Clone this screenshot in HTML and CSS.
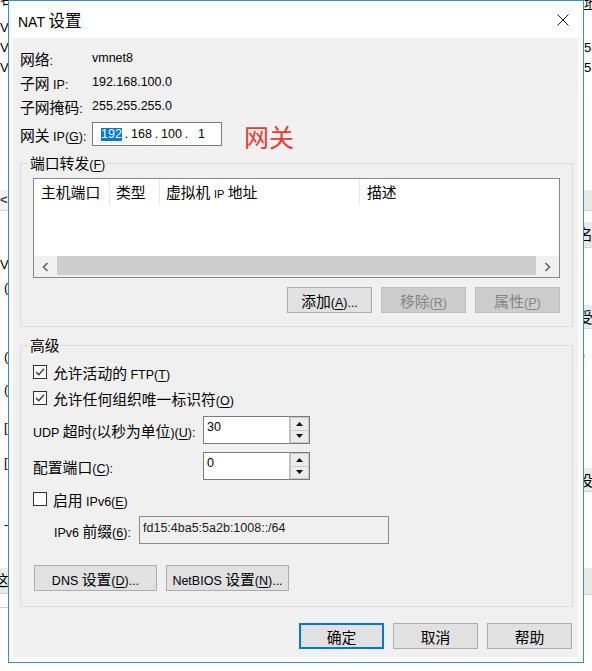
FILE: index.html
```html
<!DOCTYPE html>
<html lang="zh-CN">
<head>
<meta charset="utf-8">
<title>NAT 设置</title>
<link rel="stylesheet" href="styles.css">
</head>
<body>
<div class="desk">
  <div class="strip lstrip">
    <span class="frag c fy0">名</span>
    <span class="frag fy1">V</span>
    <span class="frag fy2">V</span>
    <span class="frag fy3">V</span>
    <div class="gbar gb1"><span class="chev">&lt;</span></div>
    <span class="frag fy4">V</span>
    <span class="frag fx fy5">(</span>
    <span class="frag fx fy6">(</span>
    <span class="frag fx fy7">(</span>
    <span class="frag fx fy8">[</span>
    <span class="frag fx fy9">[</span>
    <span class="frag fx fy10">-</span>
    <div class="gbar gb2"><span class="c cut">这</span></div>
    <div class="hline hl1"></div>
  </div>
  <div class="strip rstrip">
    <span class="frag c fy0r">地</span>
    <span class="frag fr1">58</span>
    <span class="frag fr2">58</span>
    <div class="gbar gr1"></div>
    <div class="gbar gr2"><span class="c cut">名</span></div>
    <div class="gbar gr3"><span class="c cut">受</span></div>
    <span class="frag c cut fr3">受</span>
    <div class="gbar gr4"><span class="c cut">设</span></div>
    <div class="gbar gr5"></div>
  </div>
</div>

<div class="dialog">
  <div class="titlebar">
    <span class="ttl"><span class="tl">NAT</span> <span class="tc">设置</span></span>
    <svg class="close" width="12" height="12" viewBox="0 0 12 12"><path d="M0.5 0.5 L11.5 11.5 M11.5 0.5 L0.5 11.5" stroke="#1a1a1a" stroke-width="1" fill="none"/></svg>
  </div>
  <div class="frame">
    <div class="client">
      <div class="row"><span class="lbl"><span class="c">网络</span>:</span><span>vmnet8</span></div>
      <div class="row"><span class="lbl"><span class="c">子网</span> IP:</span><span>192.168.100.0</span></div>
      <div class="row"><span class="lbl"><span class="c">子网掩码</span>:</span><span>255.255.255.0</span></div>
      <div class="row gw">
        <span class="lbl"><span class="c">网关</span> IP(<u>G</u>):</span>
        <div class="ipbox">
          <span class="fld"><span class="sel">192</span></span><span class="dot">.</span><span class="fld">168</span><span class="dot">.</span><span class="fld">100</span><span class="dot">.</span><span class="fld">1</span>
        </div>
        <span class="note">网关</span>
      </div>

      <fieldset class="grp g1">
        <legend><span class="c">端口转发</span>(<u>F</u>)</legend>
        <div class="g1in">
          <div class="lv">
            <div class="lvhead">
              <div class="col k1"><span class="c">主机端口</span></div>
              <div class="col k2"><span class="c">类型</span></div>
              <div class="col k3"><span class="c">虚拟机</span> <span class="sm">IP</span> <span class="c">地址</span></div>
              <div class="col k4"><span class="c">描述</span></div>
            </div>
            <div class="lvbody"></div>
            <div class="hscroll">
              <div class="arr"><svg width="7" height="10" viewBox="0 0 7 10"><polyline points="5.5,1 1.5,5 5.5,9" fill="none" stroke="#606060" stroke-width="1.6"/></svg></div>
              <div class="thumb"></div>
              <div class="arr"><svg width="7" height="10" viewBox="0 0 7 10"><polyline points="1.5,1 5.5,5 1.5,9" fill="none" stroke="#606060" stroke-width="1.6"/></svg></div>
            </div>
          </div>
          <div class="btnrow">
            <button class="btn"><span><span class="c">添加</span>(<u>A</u>)...</span></button>
            <button class="btn dis"><span><span class="c">移除</span>(<u>R</u>)</span></button>
            <button class="btn dis"><span><span class="c">属性</span>(<u>P</u>)</span></button>
          </div>
        </div>
      </fieldset>

      <fieldset class="grp g2">
        <legend><span class="c">高级</span></legend>
        <div class="g2in">
          <div class="cb">
            <span class="box"><svg width="12" height="12" viewBox="0 0 12 12"><polyline points="2,6 4.8,8.8 10,2.8" fill="none" stroke="#333" stroke-width="1.3"/></svg></span>
            <span><span class="c">允许活动的</span> FTP(<u>T</u>)</span>
          </div>
          <div class="cb">
            <span class="box"><svg width="12" height="12" viewBox="0 0 12 12"><polyline points="2,6 4.8,8.8 10,2.8" fill="none" stroke="#333" stroke-width="1.3"/></svg></span>
            <span><span class="c">允许任何组织唯一标识符</span>(<u>O</u>)</span>
          </div>
          <div class="srow">
            <span class="slbl">UDP <span class="c">超时</span>(<span class="c">以秒为单位</span>)(<u>U</u>):</span>
            <div class="spin">
              <div class="val">30</div>
              <div class="sb">
                <div class="sbb"><svg width="7" height="4" viewBox="0 0 7 4"><polygon points="0,4 3.5,0 7,4" fill="#111"/></svg></div>
                <div class="sbb"><svg width="7" height="4" viewBox="0 0 7 4"><polygon points="0,0 3.5,4 7,0" fill="#111"/></svg></div>
              </div>
            </div>
          </div>
          <div class="srow">
            <span class="slbl"><span class="c">配置端口</span>(<u>C</u>):</span>
            <div class="spin">
              <div class="val">0</div>
              <div class="sb">
                <div class="sbb"><svg width="7" height="4" viewBox="0 0 7 4"><polygon points="0,4 3.5,0 7,4" fill="#111"/></svg></div>
                <div class="sbb"><svg width="7" height="4" viewBox="0 0 7 4"><polygon points="0,0 3.5,4 7,0" fill="#111"/></svg></div>
              </div>
            </div>
          </div>
          <div class="cb cb3">
            <span class="box"></span>
            <span><span class="c">启用</span> IPv6(<u>E</u>)</span>
          </div>
          <div class="srow ip6">
            <span class="slbl2">IPv6 <span class="c">前缀</span>(<u>6</u>):</span>
            <div class="tb">fd15:4ba5:5a2b:1008::/64</div>
          </div>
          <div class="brow2">
            <button class="btn w"><span>DNS <span class="c">设置</span>(<u>D</u>)...</span></button>
            <button class="btn w"><span>NetBIOS <span class="c">设置</span>(<u>N</u>)...</span></button>
          </div>
        </div>
      </fieldset>

      <div class="dlgbtns">
        <button class="btn def"><span class="c">确定</span></button>
        <button class="btn"><span class="c">取消</span></button>
        <button class="btn"><span class="c">帮助</span></button>
      </div>
    </div>
  </div>
</div>
</body>
</html>
```

FILE: styles.css
```css
* { box-sizing: border-box; }
html, body { margin: 0; padding: 0; }
body {
  width: 592px;
  height: 671px;
  overflow: hidden;
  position: relative;
  background: #ffffff;
  font-family: "Liberation Sans", "Noto Sans CJK SC", sans-serif;
  font-size: 12.5px;
  color: #000;
}
.c { font-family: "Noto Sans CJK SC", "Liberation Sans", sans-serif; font-size: 14.8px; }
u { text-decoration: underline; text-underline-offset: 2px; text-decoration-thickness: 1px; }

/* background window (partially visible behind the dialog) */
.desk { position: absolute; inset: 0; }
.strip { position: absolute; top: 0; width: 8px; height: 671px; overflow: hidden; }
.lstrip { left: 0; }
.rstrip { left: 584px; }
.frag { position: absolute; left: 0; line-height: 16px; white-space: nowrap; font-size: 13px; }
.fx { left: 4px; }
.fy0 { top: -9px; }
.fy1 { top: 20px; }
.fy2 { top: 40px; }
.fy3 { top: 60px; }
.fy4 { top: 257px; }
.fy5 { top: 280px; }
.fy6 { top: 349px; }
.fy7 { top: 382px; }
.fy8 { top: 420px; }
.fy9 { top: 455px; }
.fy10 { top: 517px; }
.fy0r { top: -5px; text-decoration: underline; }
.fr1 { top: 40px; }
.fr2 { top: 60px; }
.fr3 { top: 344px; left: -6px; }
.gbar { position: absolute; left: 0; width: 8px; background: #e9e9e9; border-bottom: 1px solid #d2d2d2; overflow: hidden; }
.gb1 { top: 190px; height: 21px; background: #f2f2f2; }
.gb2 { top: 568px; height: 26px; }
.chev { display: block; line-height: 20px; font-size: 13px; font-weight: bold; color: #444; }
.cut { display: block; margin-left: -6px; line-height: 24px; }
.hline { position: absolute; left: 0; width: 8px; height: 1px; background: #cfcfcf; }
.hl1 { top: 607px; }
.gr1 { top: 190px; height: 21px; }
.gr2 { top: 222px; height: 26px; }
.gr3 { top: 305px; height: 24px; }
.gr4 { top: 468px; height: 24px; }
.gr5 { top: 568px; height: 27px; }

/* dialog */
.dialog {
  position: absolute;
  left: 8px;
  top: 0;
  width: 576px;
  height: 663px;
  border: 1px solid #3d8bd2;
  background: #fbfbfb;
  display: flex;
  flex-direction: column;
}
.titlebar {
  height: 37px;
  flex: none;
  background: #fff;
  display: flex;
  align-items: center;
  justify-content: space-between;
  padding: 0 14px 0 9px;
}
.tl { font-size: 14px; }
.tc { font-family: "Noto Sans CJK SC", sans-serif; font-size: 16.5px; }
.close { display: block; }
.frame { flex: 1; display: flex; padding: 0 5px 5px 4px; }
.client { flex: 1; background: #f0f0f0; padding: 8px 5px 0 7px; }

.row { display: flex; align-items: center; height: 24px; white-space: nowrap; }
.lbl { width: 72px; flex: none; }
.row.gw { margin-top: 4px; }
.ipbox {
  width: 130px;
  height: 24px;
  border: 1px solid #7a7a7a;
  background: #fff;
  display: flex;
  align-items: center;
  padding-left: 7px;
  flex: none;
}
.fld { width: 23px; text-align: center; }
.dot { width: 7px; text-align: center; }
.sel { display: inline-block; background: #0078d7; color: #fff; line-height: 13px; }
.note {
  color: #ea3b35;
  font-family: "Noto Sans CJK SC", sans-serif;
  font-size: 25px;
  line-height: 24px;
  margin-left: 22px;
  margin-top: 4px;
}

/* group boxes */
.grp { margin: 9px 0 0; padding: 0; border: 1px solid #dcdcdc; min-width: 0; }
.grp legend { margin-left: 8px; padding: 0 1px; height: 16px; line-height: 16px; white-space: nowrap; }
.g2 { margin-top: 10px; }
.g1in { padding: 7px 12px 13px; }
.g2in { padding: 10px 12px 15px; }

/* list view */
.lv { height: 100px; border: 1px solid #828790; background: #fff; display: flex; flex-direction: column; }
.lvhead { height: 26px; display: flex; flex: none; }
.col { height: 26px; line-height: 26px; border-right: 1px solid #e5e5e5; padding-left: 6px; white-space: nowrap; }
.k1 { width: 76px; padding-left: 7px; }
.k2 { width: 50px; }
.k3 { width: 200px; }
.k4 { flex: 1; border-right: 0; padding-left: 7px; }
.sm { font-size: 11px; }
.lvbody { flex: 1; }
.hscroll { height: 21px; flex: none; display: flex; background: #f0f0f0; }
.arr { width: 23px; display: flex; align-items: center; justify-content: center; }
.arr svg { display: block; }
.thumb { flex: 1; background: #cdcdcd; margin-bottom: 2px; }

/* buttons */
.btn {
  width: 85px;
  height: 26px;
  margin: 0;
  padding: 0;
  border: 1px solid #adadad;
  background: #e1e1e1;
  color: #000;
  font: inherit;
  display: flex;
  align-items: center;
  justify-content: center;
  white-space: nowrap;
}
.btn.dis { background: #cccccc; border-color: #bfbfbf; color: #838383; }
.btn.def { border: 2px solid #0078d7; }
.btn.w { width: 123px; }
.btnrow { display: flex; justify-content: flex-end; gap: 9px; margin-top: 9px; }
.brow2 { display: flex; gap: 9px; margin: 21px 0 0 1px; }
.dlgbtns { display: flex; justify-content: flex-end; gap: 9px; margin: 16px 1px 0 0; }

/* checkboxes */
.cb { display: flex; align-items: center; height: 18px; white-space: nowrap; }
.cb + .cb { margin-top: 8px; }
.cb3 { margin-top: 10px; }
.box {
  width: 14px;
  height: 14px;
  flex: none;
  border: 1px solid #333;
  background: #fff;
  margin-right: 6px;
  display: flex;
  align-items: center;
  justify-content: center;
}
.box svg { display: block; }

/* spinner rows */
.srow { display: flex; align-items: center; height: 28px; margin-top: 9px; white-space: nowrap; }
.slbl { width: 170px; flex: none; }
.spin { display: flex; width: 107px; height: 28px; flex: none; }
.val {
  flex: 1;
  background: #fff;
  border: 1px solid #7a7a7a;
  border-right: 0;
  padding: 2px 3px;
  line-height: 16px;
}
.sb { width: 21px; display: flex; flex-direction: column; border: 1px solid #7a7a7a; border-left: 1px solid #b9b9b9; background: #fff; }
.sbb { flex: 1; display: flex; align-items: center; justify-content: center; background: #ececec; border: 1px solid #c9c9c9; }
.sbb + .sbb { border-top: 0; }
.sbb svg { display: block; }
.srow + .srow { margin-top: 8px; }
.ip6 { margin-top: 8px; }
.slbl2 { margin-left: 21px; width: 85px; flex: none; }
.tb {
  width: 250px;
  height: 28px;
  border: 1px solid #8a8a8a;
  background: #f0f0f0;
  padding: 3px 3px;
  line-height: 16px;
  color: #1a1a1a;
}
```
